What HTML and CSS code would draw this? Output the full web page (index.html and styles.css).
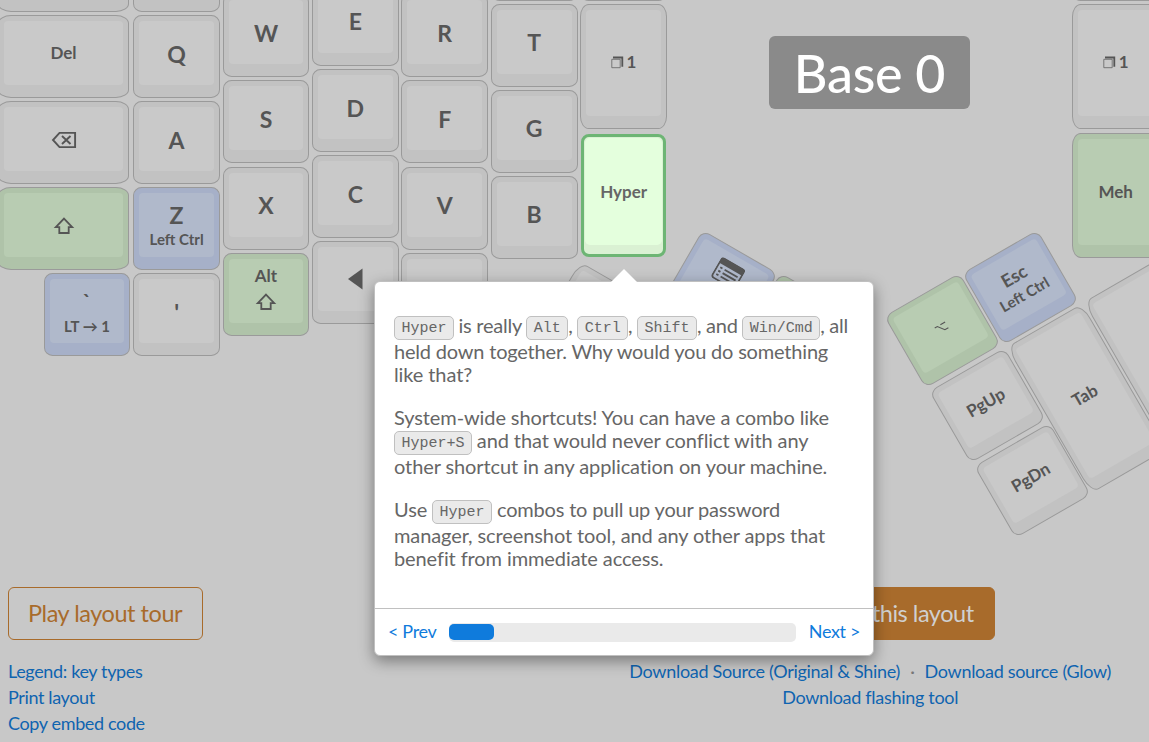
FILE: index.html
```html
<!DOCTYPE html>
<html lang="en">
<head>
<meta charset="utf-8">
<title>Keyboard layout tour</title>
<link rel="stylesheet" href="styles.css">
</head>
<body>
<svg class="defs" width="0" height="0">
  <symbol id="shift" viewBox="0 0 22 18"><path d="M11 1.6 L19.2 10.2 H15.7 V16 H6.3 V10.2 H2.8 Z" fill="none" stroke="currentColor" stroke-width="1.8"/></symbol>
  <symbol id="layer" viewBox="0 0 13 13"><path d="M.8 3.300 H9.200 V11.700 H.8 Z" fill="none" stroke="currentColor" stroke-width=".7"/><path d="M2 1.500 H11.300 V10.800" fill="none" stroke="currentColor" stroke-width="1.800"/></symbol>
</svg>
<main class="page">
  <section class="board">
    <div class="col wide">
      <div class="key"><div class="face"></div></div>
      <div class="key"><div class="face mid">Del</div></div>
      <div class="key"><div class="face"><svg width="26" height="18" viewBox="0 0 26 18"><path d="M8.500 1.900 H24.100 V16.100 H8.500 L2 9 Z" fill="none" stroke="currentColor" stroke-width="1.900"/><path d="M11 5 L19.500 13 M19.500 5 L11 13" stroke="currentColor" stroke-width="1.900"/></svg></div></div>
      <div class="key green"><div class="face"><svg width="22" height="18"><use href="#shift"/></svg></div></div>
      <div class="key blue single"><div class="face"><span class="tick">`</span><span class="sub">LT → 1</span></div></div>
    </div>
    <div class="col c1">
      <div class="key"><div class="face"></div></div>
      <div class="key"><div class="face">Q</div></div>
      <div class="key"><div class="face">A</div></div>
      <div class="key blue"><div class="face">Z<span class="sub">Left Ctrl</span></div></div>
      <div class="key"><div class="face">'</div></div>
    </div>
    <div class="col c2">
      <div class="key"><div class="face">W</div></div>
      <div class="key"><div class="face">S</div></div>
      <div class="key"><div class="face">X</div></div>
      <div class="key green"><div class="face altshift"><span class="mid">Alt</span><svg width="22" height="18"><use href="#shift"/></svg></div></div>
    </div>
    <div class="col c3">
      <div class="key"><div class="face">E</div></div>
      <div class="key"><div class="face">D</div></div>
      <div class="key"><div class="face">C</div></div>
      <div class="key"><div class="face arrow"><svg width="16" height="22" viewBox="0 0 16 22"><path d="M15.500 .5 V21.500 L1 11 Z" fill="currentColor"/></svg></div></div>
    </div>
    <div class="col c2">
      <div class="key"><div class="face">R</div></div>
      <div class="key"><div class="face">F</div></div>
      <div class="key"><div class="face">V</div></div>
      <div class="key"><div class="face"></div></div>
    </div>
    <div class="col c5">
      <div class="key"><div class="face"></div></div>
      <div class="key"><div class="face">T</div></div>
      <div class="key"><div class="face">G</div></div>
      <div class="key"><div class="face">B</div></div>
    </div>
    <div class="col c6">
      <div class="key"><div class="face"></div></div>
      <div class="key tall"><div class="face mid"><span class="layer"><svg width="13" height="13"><use href="#layer"/></svg>1</span></div></div>
      <div class="key tall active"><div class="face mid">Hyper</div></div>
    </div>
    <div class="col c6 right">
      <div class="key"><div class="face"></div></div>
      <div class="key tall"><div class="face mid"><span class="layer"><svg width="13" height="13"><use href="#layer"/></svg>1</span></div></div>
      <div class="key tall green"><div class="face mid">Meh</div></div>
    </div>

    <div class="key thumb double l1"><div class="face"></div></div>
    <div class="key thumb blue l2"><div class="face"><svg class="menu" width="28" height="24" viewBox="0 0 28 24"><rect x="1" y="1" width="26" height="22" rx="2.500" fill="none" stroke="currentColor" stroke-width="1.800"/><path d="M1 1.500 H27 V7 H1 Z" fill="currentColor"/><path d="M4 10.500 H6.500 M4 14.500 H6.500 M4 18.500 H6.500 M9 10.500 H24 M9 14.500 H24 M9 18.500 H24" stroke="currentColor" stroke-width="1.800"/></svg></div></div>
    <div class="key thumb green l3"><div class="face"></div></div>
    <div class="key thumb green r1"><div class="face"><svg width="14" height="10" viewBox="0 0 14 10"><path d="M1 1.500 H4 L9 8 H13 M7.500 1.500 H13" fill="none" stroke="currentColor" stroke-width="1.100"/></svg></div></div>
    <div class="key thumb blue r2"><div class="face"><span class="esc">Esc</span><span class="sub">Left Ctrl</span></div></div>
    <div class="key thumb r3"><div class="face mid">PgUp</div></div>
    <div class="key thumb r4"><div class="face mid">PgDn</div></div>
    <div class="key thumb double r5"><div class="face mid">Tab</div></div>
    <div class="key thumb double r6"><div class="face"></div></div>
    <h1 class="title">Base 0</h1>
  </section>

  <footer class="foot">
    <div class="left">
      <a class="btn outline">Play layout tour</a>
      <a>Legend: key types</a>
      <a>Print layout</a>
      <a>Copy embed code</a>
    </div>
    <div class="downloads">
      <a class="btn solid">this layout</a>
      <div><a>Download Source (Original &amp; Shine)</a><span class="dot">·</span><a>Download source (Glow)</a></div>
      <a>Download flashing tool</a>
    </div>
  </footer>

  <aside class="popup">
    <div class="body">
      <p><span class="tight keys"><kbd>Hyper</kbd> is really <kbd>Alt</kbd>, <kbd>Ctrl</kbd>, <kbd>Shift</kbd>, and <kbd>Win/Cmd</kbd>, all</span><br><span class="tight">held down together. Why would you do something</span><br>like that?</p>
      <p>System-wide shortcuts! You can have a combo like<br><kbd>Hyper+S</kbd> and that would never conflict with any<br>other shortcut in any application on your machine.</p>
      <p>Use <kbd>Hyper</kbd> <span class="tight">combos to pull up your password</span><br>manager, screenshot tool, and any other apps that<br>benefit from immediate access.</p>
    </div>
    <div class="nav">
      <a>&lt; Prev</a>
      <div class="track"><div class="bar"></div></div>
      <a>Next &gt;</a>
    </div>
  </aside>
</main>
</body>
</html>
```
FILE: styles.css
```css
* { box-sizing: border-box; }
body {
  margin: 0;
  background: #c8c8c8;
  font-family: Lato, sans-serif;
  color: #555;
}
.defs { position: absolute; }
.page {
  position: relative;
  height: 742px;
  overflow: hidden;
}
.board {
  position: relative;
  display: flex;
  gap: 2.6px;
  height: 587px;
  align-items: flex-start;
}

/* Columns and keys */
.col {
  flex: none;
  display: flex;
  flex-direction: column;
  gap: 3.1px;
  width: 86.8px;
  margin-top: -6px;
}
.wide { width: 131px; margin: -71px 1.6px 0 -2px; }
.c1 { margin-top: -71px; }
.c2 { gap: 3.4px; }
.c3 { gap: 3.2px; margin-top: -17.1px; }
.c5, .c6 { margin-top: -82.3px; }
.right { margin-left: 402.8px; }
.key {
  flex: none;
  height: 83px;
  padding: 5px 5px 12px;
  border: 1px solid #9a9a9a;
  border-radius: 10%;
  background: #c2c2c2;
}
.tall { height: 125px; }
.single { width: 86px; align-self: flex-end; margin-right: -1px; }
.face {
  height: 100%;
  display: flex;
  flex-direction: column;
  align-items: center;
  justify-content: center;
  padding-top: 1px;
  border-radius: 4px;
  background: #c9c9c9;
  font-size: 23px;
  font-weight: 700;
  line-height: 26px;
}
.green { background: #afc3a9; }
.green .face { background: #b8ccb2; }
.blue { background: #a6b0c8; }
.blue .face { background: #b0b9cb; }
.face.mid, .mid { font-size: 17px; padding-top: 0; }
.sub { font-size: 15px; line-height: 22px; }
.tick { font-size: 21px; line-height: 28px; }
.face.altshift { padding-bottom: 9px; }
.altshift svg { margin-top: 4px; }
.face.arrow { padding-bottom: 2px; }
.esc { font-size: 18px; line-height: 20px; }
.layer { display: flex; align-items: center; gap: 3px; padding-bottom: 1px; }
.active {
  height: 123px;
  width: 85px;
  margin: 1.800px 0 0 1px;
  padding: 1px 1px 9px;
  border: 3px solid #6db574;
  border-radius: 8px;
  background: #daf1d3;
}
.c6 .green { margin-top: 1px; }
.active .face { padding-top: 1px; background: #e4ffdd; color: #666; border-radius: 5px; }

/* Thumb clusters, fanned out freely on the board */
.thumb {
  position: absolute;
  width: 87px;
  margin: -41.500px 0 0 -43.500px;
  transform: rotate(-30deg);
}
.double { height: 168.500px; margin-top: -84.200px; }
.l1 { left: 575px; top: 356px; transform: rotate(30deg); }
.l2 { left: 719px; top: 287.500px; transform: rotate(30deg); }
.l3 { left: 797px; top: 330.500px; transform: rotate(30deg); }
.r1 { left: 942px; top: 330.500px; }
.r2 { left: 1020px; top: 287.500px; }
.r3 { left: 987px; top: 405.500px; }
.r4 { left: 1032px; top: 480.700px; }
.r5 { left: 1086px; top: 398px; }
.r6 { left: 1163.800px; top: 353px; }
.menu { margin-bottom: 27px; }

.title {
  position: absolute;
  left: 769px;
  top: 36px;
  width: 201px;
  height: 73px;
  margin: 0;
  border-radius: 6px;
  background: #8a8a8a;
  color: #fff;
  font-size: 52px;
  font-weight: 500;
  line-height: 75px;
  letter-spacing: -.2px;
  text-align: center;
}

/* Footer */
.foot {
  display: flex;
  justify-content: space-between;
  padding: 0 38px 0 8px;
  font-size: 18px;
  line-height: 26px;
  letter-spacing: -.3px;
  color: #777;
}
.foot a { color: #0f64b0; }
.left, .downloads { display: flex; flex-direction: column; white-space: nowrap; }
.left { align-items: flex-start; letter-spacing: -.36px; }
.downloads { align-items: center; }
.foot .btn {
  height: 53px;
  margin-bottom: 18px;
  padding: 0 20px;
  border: 1px solid #a86b2b;
  border-radius: 6px;
  font-size: 23.500px;
  line-height: 51px;
  letter-spacing: -.46px;
}
.foot .outline { width: 195px; padding: 0 19px; color: #a86b2b; }
.foot .solid { width: 249px; background: #a86b2b; color: #d0d0d0; text-align: right; }
.dot { margin: 0 10px; }

/* Tour popup */
.popup {
  position: absolute;
  left: 374px;
  top: 281px;
  width: 500px;
  height: 375px;
  display: flex;
  flex-direction: column;
  border: 1px solid #c0c0c0;
  border-radius: 6px;
  background: #fff;
  box-shadow: 0 5px 15px rgba(0, 0, 0, .4);
}
.popup::before {
  content: "";
  position: absolute;
  left: 236px;
  top: -13px;
  border: solid transparent;
  border-width: 0 13px 13px;
  border-bottom-color: #fff;
}
.body {
  flex: 1;
  padding: 32px 19px 0;
  font-size: 20px;
  line-height: 23px;
  letter-spacing: -.1px;
  color: #666;
  white-space: nowrap;
}
.body p { margin: 0 0 20px; }
.tight { letter-spacing: -.19px; }
.keys { word-spacing: -.25px; }
kbd {
  display: inline-block;
  height: 24px;
  padding: 0 6.400px;
  border: 1px solid #c0c0c0;
  border-radius: 5px;
  background: #eaeaea;
  font: 15px/23px "Courier New", "Liberation Mono", monospace;
  letter-spacing: 0;
  vertical-align: 1px;
}
.nav {
  flex: none;
  display: flex;
  align-items: center;
  gap: 13px;
  height: 47px;
  padding: 0 13px;
  border-top: 1px solid #c0c0c0;
  font-size: 18px;
  letter-spacing: -.35px;
  color: #0f7bdc;
}
.nav a { padding-bottom: 2px; }
.track { flex: 1; height: 19px; padding: 1px 0; border-radius: 5px; background: #eaeaea; }
.bar { width: 13%; height: 16px; border-radius: 5px; background: #0f7bdc; }
```
